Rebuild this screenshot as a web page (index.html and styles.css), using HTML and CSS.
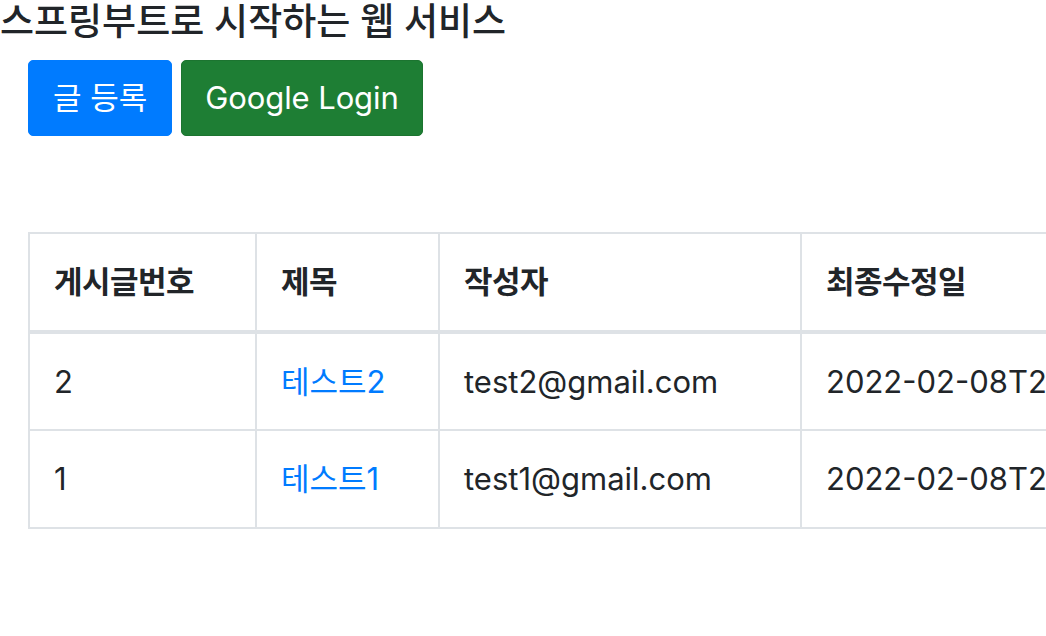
FILE: index.html
```html
<!DOCTYPE html>
<html lang="ko">
<head>
<meta charset="utf-8">
<title>스프링부트로 시작하는 웹 서비스</title>
<link rel="stylesheet" href="styles.css">
</head>
<body>
<h1 class="page-title">스프링부트로 시작하는 웹 서비스</h1>
<div class="col-md-12">
  <div class="actions">
    <a href="#" class="btn btn-primary">글 등록</a>
    <a href="#" class="btn btn-success">Google Login</a>
  </div>
  <table class="table">
    <colgroup>
      <col class="c-id">
      <col class="c-title">
      <col class="c-author">
      <col class="c-date">
    </colgroup>
    <thead>
      <tr>
        <th>게시글번호</th>
        <th>제목</th>
        <th>작성자</th>
        <th>최종수정일</th>
      </tr>
    </thead>
    <tbody>
      <tr>
        <td>2</td>
        <td><a href="#" class="post-link">테스트2</a></td>
        <td>test2@gmail.com</td>
        <td>2022-02-08T21:37:14.284</td>
      </tr>
      <tr>
        <td>1</td>
        <td><a href="#" class="post-link">테스트1</a></td>
        <td>test1@gmail.com</td>
        <td>2022-02-08T21:36:52.107</td>
      </tr>
    </tbody>
  </table>
</div>
</body>
</html>
```

FILE: styles.css
```css
html, body {
  margin: 0;
  padding: 0;
  background: #fff;
  overflow: hidden;
}

body {
  font-family: Inter, "Noto Sans CJK KR", sans-serif;
  font-size: 31px;
  line-height: 1.5;
  color: #212529;
  width: 1046px;
  height: 636px;
}

.page-title {
  margin: 0;
  font-size: 37px;
  font-weight: 500;
  line-height: 44px;
  white-space: nowrap;
}

.col-md-12 {
  padding-left: 28px;
}

.actions {
  display: flex;
  gap: 9px;
  margin-top: 16px;
}

.btn {
  display: inline-block;
  padding: 14px 24px;
  border: 1px solid transparent;
  border-radius: 5px;
  color: #fff;
  text-decoration: none;
  font-size: 31px;
  line-height: 46px;
  white-space: nowrap;
}

.btn-primary {
  background: #007bff;
  border-color: #007bff;
}

.btn-success {
  background: #1e7e34;
  border-color: #1c7430;
  padding-left: 23px;
  padding-right: 23px;
  letter-spacing: -0.1px;
}

.table {
  margin-top: 96px;
  border-collapse: collapse;
  table-layout: fixed;
  width: 1272px;
}

.c-id { width: 227px; }
.c-title { width: 183px; }
.c-author { width: 362px; }
.c-date { width: 500px; }

.table th,
.table td {
  border: 2px solid #dee2e6;
  text-align: left;
  vertical-align: top;
  white-space: nowrap;
  overflow: hidden;
}

.table th {
  padding: 25px 24px 24px;
  font-weight: 700;
  border-bottom-width: 4px;
  letter-spacing: -0.5px;
}

.table td {
  padding: 25px 24px 24px;
}

.post-link {
  color: #007bff;
  text-decoration: none;
}
```
